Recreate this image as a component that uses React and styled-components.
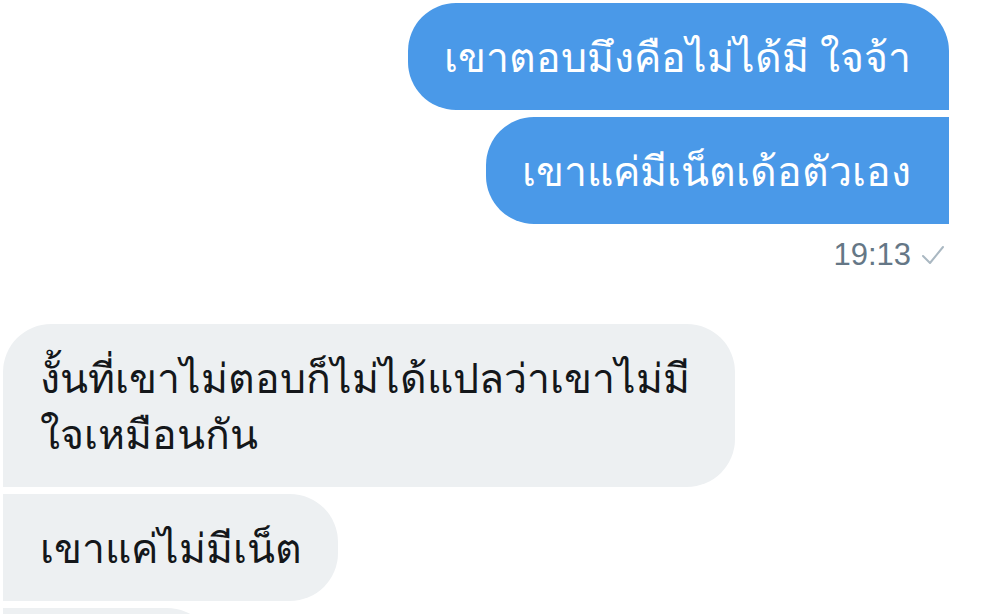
import React from 'react'
import styled, { createGlobalStyle } from 'styled-components'

const GlobalStyle = createGlobalStyle`
  html, body {
    margin: 0;
    padding: 0;
    background: #ffffff;
    overflow: hidden;
  }
  body {
    font-family: "Noto Sans", "DejaVu Sans", sans-serif;
  }
`

const Thread = styled.div`
  display: flex;
  flex-direction: column;
  padding: 3px 49px 0 3px;
  height: 614px;
  box-sizing: border-box;
  overflow: hidden;
`

const Group = styled.div`
  display: flex;
  flex-direction: column;
  align-items: ${(p) => (p.$mine ? 'flex-end' : 'flex-start')};
  gap: 7px;
  margin-bottom: ${(p) => p.$space || 0}px;
`

const Bubble = styled.div`
  box-sizing: border-box;
  width: ${(p) => (p.$width ? `${p.$width}px` : 'auto')};
  min-height: 107px;
  flex-shrink: 0;
  padding: ${(p) => (p.$mine ? '25px 38px 26px 36px' : '25px 36px 26px 37px')};
  font-size: 41px;
  line-height: 56px;
  color: ${(p) => (p.$mine ? '#ffffff' : '#14171a')};
  background: ${(p) => (p.$mine ? '#4a99e8' : '#edf0f2')};
  border-radius: ${(p) => p.$radius};
  white-space: pre;
`

const Meta = styled.div`
  display: flex;
  align-items: center;
  gap: 10px;
  margin-top: 6px;
  padding-right: 4px;
  font-family: "Liberation Sans", Arial, sans-serif;
  font-size: 31px;
  color: #657786;
`

const Check = () => (
  <svg width="24" height="22" viewBox="0 0 24 22" fill="none">
    <path d="M2 12 L9 19 L22 3" stroke="#aab8c2" strokeWidth="2" strokeLinecap="round" strokeLinejoin="round" />
  </svg>
)

const R = '48px'

export default function App() {
  return (
    <>
      <GlobalStyle />
      <Thread>
        <Group $mine $space={51}>
          <Bubble $mine $radius={`${R} ${R} 0 ${R}`}>เขาตอบมึงคือไม่ได้มี ใจจ้า</Bubble>
          <Bubble $mine $radius={`${R} 0 0 ${R}`}>เขาแค่มีเน็ตเด้อตัวเอง</Bubble>
          <Meta>
            19:13
            <Check />
          </Meta>
        </Group>
        <Group>
          <Bubble $width={732} $radius={`${R} ${R} ${R} 0`}>
            {'งั้นที่เขาไม่ตอบก็ไม่ได้แปลว่าเขาไม่มี\nใจเหมือนกัน'}
          </Bubble>
          <Bubble $radius={`0 ${R} ${R} 0`}>เขาแค่ไม่มีเน็ต</Bubble>
          <Bubble $width={212} $radius={`0 ${R} ${R} 0`} />
        </Group>
      </Thread>
    </>
  )
}
